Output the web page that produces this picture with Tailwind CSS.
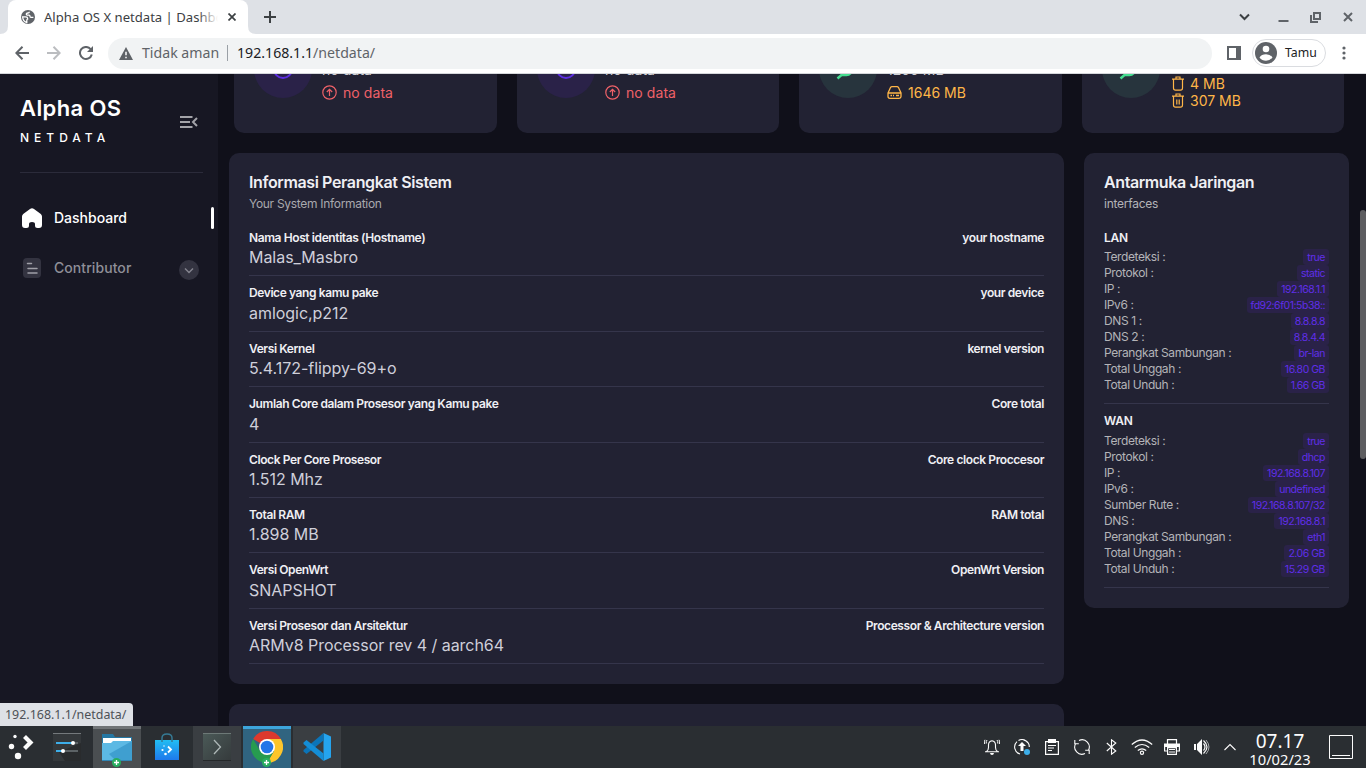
<!DOCTYPE html>
<html lang="id">
<head>
<meta charset="utf-8">
<title>Alpha OS X netdata | Dashboard</title>
<script src="https://cdn.jsdelivr.net/npm/@tailwindcss/browser@4"></script>
</head>
<body class="flex h-[768px] w-[1366px] flex-col overflow-hidden bg-[#10101a] font-['Inter',sans-serif]">

<!-- tab strip -->
<header class="flex h-[34px] shrink-0 bg-[#dee1e6] font-['Noto_Sans',sans-serif] text-[#3c4043]">
  <svg class="h-[34px] w-2 shrink-0" viewBox="0 0 8 34"><path d="M0 34Q8 34 8 26V34Z" fill="#fff"/></svg>
  <div class="flex w-[240px] items-center rounded-t-lg bg-white pl-[13px]">
    <svg class="mr-[9px] size-[14px] shrink-0" viewBox="0 0 14 14"><circle cx="7" cy="7" r="7" fill="#5f6368"/><path d="M1.600 6.800h3q2 0 2 1.800v.6q-.8 0-.8 1v2.300Q2 11.500 1.600 6.800zM8.300 1.700q0 1.300-1.500 1.300-1.500 0-1.500 1.300 0 .8.800.8h1.900q1 0 1 1.200T10 7.400h2.400" fill="none" stroke="#fff" stroke-width="1.300"/></svg>
    <div class="relative w-[174px] overflow-hidden whitespace-nowrap text-[13.1px] leading-[34px]">Alpha OS X netdata | Dashboard<span class="absolute inset-y-0 right-0 w-5 bg-gradient-to-r from-white/0 to-white"></span></div>
    <svg class="ml-[10px] size-[8px] shrink-0" viewBox="0 0 8 8"><path d="M.5.5l7 7M7.500.5l-7 7" stroke="#3c4043" stroke-width="1.700"/></svg>
  </div>
  <svg class="h-[34px] w-2 shrink-0" viewBox="0 0 8 34"><path d="M8 34Q0 34 0 26V34Z" fill="#fff"/></svg>
  <svg class="ml-2 mt-[11px] size-3" viewBox="0 0 12 12"><path d="M6 0v12M0 6h12" stroke="#3c4043" stroke-width="2"/></svg>
  <div class="ml-auto flex h-[34px] items-center pr-[13px]">
    <svg class="h-3 w-[11px]" viewBox="0 0 11 12"><path d="M1 3.500L5.500 8 10 3.500" fill="none" stroke="#3c4043" stroke-width="2"/></svg>
    <svg class="ml-[28px] h-3 w-[11px]" viewBox="0 0 11 12"><path d="M.5 10h10" stroke="#5f6368" stroke-width="2"/></svg>
    <svg class="ml-[21px] size-[11px]" viewBox="0 0 11 11"><path d="M4 1h6v6H4zM1 3v7h7" fill="none" stroke="#5f6368" stroke-width="2"/></svg>
    <svg class="ml-[22px] size-[10px]" viewBox="0 0 10 10"><path d="M1 1l8 8M9 1L1 9" stroke="#5f6368" stroke-width="2"/></svg>
  </div>
</header>

<!-- toolbar -->
<div class="flex h-10 shrink-0 items-center border-b border-[#d5d7db] bg-white pl-[15px] pr-[20px] pb-px font-['Noto_Sans',sans-serif]">
  <svg class="h-[14px] w-[14px]" viewBox="0 0 14 14"><path d="M14 7H1.500M7.500 .8L1.300 7l6.200 6.200" fill="none" stroke="#5f6368" stroke-width="2"/></svg>
  <svg class="ml-[18px] h-[14px] w-[14px]" viewBox="0 0 14 14"><path d="M0 7h12.500M6.500 .8L12.700 7l-6.200 6.200" fill="none" stroke="#bbbdc0" stroke-width="2"/></svg>
  <svg class="ml-[18px] h-[14px] w-[14px]" viewBox="0 0 14 14"><path d="M11.600 3.100A6 6 0 1 0 12.800 8.500" fill="none" stroke="#5f6368" stroke-width="2"/><path d="M14 0v6H8z" fill="#5f6368"/></svg>
  <div class="ml-[15px] flex h-[31px] w-[1104px] items-center rounded-full bg-[#f1f3f4] pl-[11px] text-[14.15px] leading-[29px]">
    <svg class="h-[13px] w-[14px]" viewBox="0 0 14 13"><path d="M7 0l7 13H0z" fill="#5f6368"/><path d="M7 4.800v3.500M7 9.700v1.500" stroke="#fff" stroke-width="1.500"/></svg>
    <span class="ml-[9px] h-[31px] w-[77px] whitespace-nowrap text-[#5f6368]">Tidak aman</span>
    <span class="ml-[8px] h-4 w-px bg-[#9aa0a6]"></span>
    <span class="ml-[9px] h-[31px] text-[#202124]">192.168.1.1<span class="text-[#5f6368]">/netdata/</span></span>
  </div>
  <svg class="ml-[15px] size-[14px]" viewBox="0 0 14 14"><path d="M1 1h12v12H1z" fill="none" stroke="#5f6368" stroke-width="2"/><path d="M9 0h5v14H9z" fill="#5f6368"/></svg>
  <div class="ml-[11px] flex h-7 w-[74px] items-center rounded-full border border-[#dadce0] pl-[2px] text-[12.3px] text-[#202124]">
    <svg class="mr-[8px] size-[22px]" viewBox="0 0 22 22"><circle cx="11" cy="11" r="11" fill="#5f6368"/><circle cx="11" cy="7" r="3.300" fill="#fff"/><path d="M4.500 15.500q2-3.300 6.500-3.300t6.500 3.300q-2.500 3.200-6.500 3.200t-6.500-3.200z" fill="#fff"/></svg>Tamu
  </div>
  <svg class="ml-auto mr-0 h-[14px] w-1" viewBox="0 0 4 14"><g fill="#5f6368"><circle cx="2" cy="2" r="1.600"/><circle cx="2" cy="7" r="1.600"/><circle cx="2" cy="12" r="1.600"/></g></svg>
</div>

<!-- page -->
<div class="relative flex min-h-0 grow overflow-hidden">
  <aside class="w-[218px] shrink-0 bg-[#171723]">
    <div class="ml-5 mt-[21px] flex h-[78px] w-[183px] border-b border-[#2b2b3a]">
      <div class="grow text-white">
        <div class="text-[22px] font-semibold leading-[27px] tracking-[0.4px]">Alpha OS</div>
        <div class="mt-[8px] text-[12px] font-medium leading-4 tracking-[5px]">NETDATA</div>
      </div>
      <svg class="mr-[5px] mt-[21px] h-3 w-[18px]" viewBox="0 0 18 12"><path d="M0 1h12.500M0 6h10M0 11h12.500M17 2l-4 4 4 4" fill="none" stroke="#a3a3a8" stroke-width="2"/></svg>
    </div>
    <div class="mt-[34px] flex h-[22px] items-center pl-[22px] pr-1 text-[14px] font-medium text-white">
      <svg class="h-5 w-5" viewBox="0 0 20 20"><path d="M0 8.500Q0 7 1.200 5.900L8 .9q2-1.400 4 0l6.800 5Q20 7 20 8.500V17q0 3-3 3h-1.500Q13 20 13 17.500V16q0-2-3-2t-3 2v1.500Q7 20 4.500 20H3q-3 0-3-3z" fill="#fff"/></svg>
      <span class="mb-[2px] ml-3 grow">Dashboard</span>
      <span class="h-[22px] w-[3px] rounded-sm bg-white"></span>
    </div>
    <div class="mt-[28px] flex h-[22px] items-center pl-[23px] pr-[19px] text-[14px] font-medium text-[#8f8f98]">
      <svg class="h-5 w-[18px]" viewBox="0 0 18 20"><rect width="18" height="20" rx="4" fill="#333340"/><path d="M4.500 5.500h4M5 10.500h9M5 15h9" stroke="#a0a0a8" stroke-width="1.500" stroke-linecap="round"/></svg>
      <span class="mb-[2px] ml-[13px] grow tracking-[0.07px]">Contributor</span>
      <svg class="mt-1 size-5" viewBox="0 0 20 20"><circle cx="10" cy="10" r="10" fill="#333340"/><path d="M6 8.500l4 4 4-4" fill="none" stroke="#85858f" stroke-width="1.400"/></svg>
    </div>
  </aside>

  <main class="flex min-w-0 grow flex-col">
    <!-- statistic cards, scrolled part way out of view -->
    <section class="ml-4 flex h-[59px] shrink-0 gap-5">
      <div class="flex w-[263px] overflow-hidden rounded-b-[10px] bg-[#222233] pl-5">
        <svg class="h-6 w-[58px]" viewBox="0 0 58 24"><circle cx="29" cy="-5" r="29" fill="#2a2248"/><circle cx="29" cy="-5" r="9" fill="none" stroke="#5c2de0" stroke-width="2"/></svg>
        <div class="ml-[10px] -mt-[13px] text-[14px] tracking-[0.07px]"><div class="h-[22px] leading-[18px] text-[#d0d0d5]">no data</div><div class="flex items-center leading-5 text-[#ee6168]"><svg class="mr-[6px] size-[15px] -mt-[2px]" viewBox="0 0 15 15"><g fill="none" stroke="#ee6168" stroke-width="1.200"><circle cx="7.500" cy="7.500" r="6.700"/><path d="M7.500 11V4.500M4.800 7l2.700-2.700L10.200 7"/></g></svg>no data</div></div>
      </div>
      <div class="flex w-[262px] overflow-hidden rounded-b-[10px] bg-[#222233] pl-5">
        <svg class="h-6 w-[58px]" viewBox="0 0 58 24"><circle cx="29" cy="-5" r="29" fill="#2a2248"/><circle cx="29" cy="-5" r="9" fill="none" stroke="#5c2de0" stroke-width="2"/></svg>
        <div class="ml-[10px] -mt-[13px] text-[14px] tracking-[0.07px]"><div class="h-[22px] leading-[18px] text-[#d0d0d5]">no data</div><div class="flex items-center leading-5 text-[#ee6168]"><svg class="mr-[6px] size-[15px] -mt-[2px]" viewBox="0 0 15 15"><g fill="none" stroke="#ee6168" stroke-width="1.200"><circle cx="7.500" cy="7.500" r="6.700"/><path d="M7.500 11V4.500M4.800 7l2.700-2.700L10.200 7"/></g></svg>no data</div></div>
      </div>
      <div class="flex w-[263px] overflow-hidden rounded-b-[10px] bg-[#222233] pl-5">
        <svg class="h-6 w-[58px]" viewBox="0 0 58 24"><circle cx="29" cy="-5" r="29" fill="#27343d"/><path d="M18.500 4.500l4-3.500h5q3 0 5-3" fill="none" stroke="#46dd90" stroke-width="2.500"/></svg>
        <div class="ml-[10px] -mt-[13px] text-[14px]"><div class="h-[22px] leading-[18px] text-[#d0d0d5]">1200 MB</div><div class="flex items-center leading-5 text-[#ffb648]"><svg class="mr-[6px] h-[13px] w-[15px] -mt-[2px]" viewBox="0 0 15 13"><g fill="none" stroke="#ffb648" stroke-width="1.300"><path d="M1 7L3.500 1.500Q4 .7 5 .7h5q1 0 1.500.8L14 7v3.500q0 1.800-1.800 1.800H2.800Q1 12.300 1 10.500zM1 7h13"/><path d="M3.500 9.500H5M6 9.500h1M9 9.500h3"/></g></svg>1646 MB</div></div>
      </div>
      <div class="flex w-[262px] overflow-hidden rounded-b-[10px] bg-[#222233] pl-5">
        <svg class="h-6 w-[58px]" viewBox="0 0 58 24"><circle cx="29" cy="-5" r="29" fill="#27343d"/><path d="M18.500 4.500l4-3.500h5q3 0 5-3" fill="none" stroke="#46dd90" stroke-width="2.500"/></svg>
        <div class="ml-[12px] mt-px text-[14px] leading-[17px] text-[#ffb648]">
          <div class="flex items-center"><svg class="mr-[6px] h-[15px] w-3" viewBox="0 0 12 15"><path d="M0 3.200h12M4 3V1h4v2M1.500 3.500V12q0 2.200 2 2.200h5q2 0 2-2.200V3.500" fill="none" stroke="#ffb648" stroke-width="1.200"/></svg>4 MB</div>
          <div class="flex items-center"><svg class="mr-[6px] h-[15px] w-3" viewBox="0 0 12 15"><path d="M0 3.200h12M4 3V1h4v2M1.500 3.500V12q0 2.200 2 2.200h5q2 0 2-2.200V3.500M4.800 6.500v5M7.200 6.500v5" fill="none" stroke="#ffb648" stroke-width="1.200"/></svg>307 MB</div>
        </div>
      </div>
    </section>

    <div class="ml-[11px] mt-5 flex gap-5">
      <div class="w-[835px] shrink-0">
        <section class="h-[531px] rounded-[10px] bg-[#222233] px-5 pt-[19px]">
          <h2 class="text-[16px] font-semibold leading-5 tracking-[-0.38px] text-[#efeff3]">Informasi Perangkat Sistem</h2>
          <p class="mt-[4px] text-[12px] leading-4 tracking-[-0.3px] text-[#a9a9ae]">Your System Information</p>
          <div class="mt-[9px] text-[16px] leading-[22px] tracking-[-0.04px] text-[#cfcfda]">
            <div class="h-[55.4px] border-b border-[#35354b] pt-2"><div class="flex h-[17.4px] justify-between text-[12px] font-semibold leading-[18px] tracking-[-0.4px] text-[#efeff3]"><span>Nama Host identitas (Hostname)</span><span>your hostname</span></div><div>Malas_Masbro</div></div>
            <div class="h-[55.4px] border-b border-[#35354b] pt-2"><div class="flex h-[17.4px] justify-between text-[12px] font-semibold leading-[18px] tracking-[-0.4px] text-[#efeff3]"><span>Device yang kamu pake</span><span>your device</span></div><div>amlogic,p212</div></div>
            <div class="h-[55.4px] border-b border-[#35354b] pt-2"><div class="flex h-[17.4px] justify-between text-[12px] font-semibold leading-[18px] tracking-[-0.4px] text-[#efeff3]"><span>Versi Kernel</span><span>kernel version</span></div><div>5.4.172-flippy-69+o</div></div>
            <div class="h-[55.4px] border-b border-[#35354b] pt-2"><div class="flex h-[17.4px] justify-between text-[12px] font-semibold leading-[18px] tracking-[-0.4px] text-[#efeff3]"><span>Jumlah Core dalam Prosesor yang Kamu pake</span><span>Core total</span></div><div>4</div></div>
            <div class="h-[55.4px] border-b border-[#35354b] pt-2"><div class="flex h-[17.4px] justify-between text-[12px] font-semibold leading-[18px] tracking-[-0.4px] text-[#efeff3]"><span>Clock Per Core Prosesor</span><span>Core clock Proccesor</span></div><div>1.512 Mhz</div></div>
            <div class="h-[55.4px] border-b border-[#35354b] pt-2"><div class="flex h-[17.4px] justify-between text-[12px] font-semibold leading-[18px] tracking-[-0.4px] text-[#efeff3]"><span>Total RAM</span><span>RAM total</span></div><div>1.898 MB</div></div>
            <div class="h-[55.4px] border-b border-[#35354b] pt-2"><div class="flex h-[17.4px] justify-between text-[12px] font-semibold leading-[18px] tracking-[-0.4px] text-[#efeff3]"><span>Versi OpenWrt</span><span>OpenWrt Version</span></div><div>SNAPSHOT</div></div>
            <div class="h-[55.4px] border-b border-[#35354b] pt-2"><div class="flex h-[17.4px] justify-between text-[12px] font-semibold leading-[18px] tracking-[-0.4px] text-[#efeff3]"><span>Versi Prosesor dan Arsitektur</span><span>Processor &amp; Architecture version</span></div><div>ARMv8 Processor rev 4 / aarch64</div></div>
          </div>
        </section>
        <section class="mt-5 h-20 rounded-[10px] bg-[#222233]"></section>
      </div>

      <section class="h-[455px] w-[265px] shrink-0 rounded-[10px] bg-[#222233] px-5 pt-[19px]">
        <h2 class="text-[16px] font-semibold leading-5 tracking-[-0.4px] text-[#efeff3]">Antarmuka Jaringan</h2>
        <p class="mt-[4px] text-[12px] leading-4 tracking-[-0.25px] text-[#b4b4b8]">interfaces</p>
        <div class="mt-[17px] h-[175px] border-b border-[#35354b] text-[12px] leading-4 tracking-[-0.39px] text-[#b4b4b8]">
          <h3 class="mb-[2px] font-semibold leading-[18px] tracking-[-0.2px] text-[#efeff3]">LAN</h3>
          <div class="flex justify-between"><span>Terdeteksi :</span><span class="rounded-[3px] bg-[#2a2248] px-1 pt-px leading-[15px] text-[10.5px] tracking-[-0.48px] text-[#602ee8]">true</span></div>
          <div class="flex justify-between"><span>Protokol :</span><span class="rounded-[3px] bg-[#2a2248] px-1 pt-px leading-[15px] text-[10.5px] tracking-[-0.48px] text-[#602ee8]">static</span></div>
          <div class="flex justify-between"><span>IP :</span><span class="rounded-[3px] bg-[#2a2248] px-1 pt-px leading-[15px] text-[10.5px] tracking-[-0.48px] text-[#602ee8]">192.168.1.1</span></div>
          <div class="flex justify-between"><span>IPv6 :</span><span class="rounded-[3px] bg-[#2a2248] px-1 pt-px leading-[15px] text-[10.5px] tracking-[-0.48px] text-[#602ee8]">fd92:6f01:5b38::</span></div>
          <div class="flex justify-between"><span>DNS 1 :</span><span class="rounded-[3px] bg-[#2a2248] px-1 pt-px leading-[15px] text-[10.5px] tracking-[-0.48px] text-[#602ee8]">8.8.8.8</span></div>
          <div class="flex justify-between"><span>DNS 2 :</span><span class="rounded-[3px] bg-[#2a2248] px-1 pt-px leading-[15px] text-[10.5px] tracking-[-0.48px] text-[#602ee8]">8.8.4.4</span></div>
          <div class="flex justify-between"><span>Perangkat Sambungan :</span><span class="rounded-[3px] bg-[#2a2248] px-1 pt-px leading-[15px] text-[10.5px] tracking-[-0.48px] text-[#602ee8]">br-lan</span></div>
          <div class="flex justify-between"><span>Total Unggah :</span><span class="rounded-[3px] bg-[#2a2248] px-1 pt-px leading-[15px] text-[10.5px] tracking-[-0.48px] text-[#602ee8]">16.80 GB</span></div>
          <div class="flex justify-between"><span>Total Unduh :</span><span class="rounded-[3px] bg-[#2a2248] px-1 pt-px leading-[15px] text-[10.5px] tracking-[-0.48px] text-[#602ee8]">1.66 GB</span></div>
        </div>
        <div class="h-[184px] border-b border-[#35354b] pt-2 text-[12px] leading-4 tracking-[-0.39px] text-[#b4b4b8]">
          <h3 class="mb-[3px] font-semibold leading-[18px] tracking-[-0.2px] text-[#efeff3]">WAN</h3>
          <div class="flex justify-between"><span>Terdeteksi :</span><span class="rounded-[3px] bg-[#2a2248] px-1 pt-px leading-[15px] text-[10.5px] tracking-[-0.48px] text-[#602ee8]">true</span></div>
          <div class="flex justify-between"><span>Protokol :</span><span class="rounded-[3px] bg-[#2a2248] px-1 pt-px leading-[15px] text-[10.5px] tracking-[-0.48px] text-[#602ee8]">dhcp</span></div>
          <div class="flex justify-between"><span>IP :</span><span class="rounded-[3px] bg-[#2a2248] px-1 pt-px leading-[15px] text-[10.5px] tracking-[-0.48px] text-[#602ee8]">192.168.8.107</span></div>
          <div class="flex justify-between"><span>IPv6 :</span><span class="rounded-[3px] bg-[#2a2248] px-1 pt-px leading-[15px] text-[10.5px] tracking-[-0.48px] text-[#602ee8]">undefined</span></div>
          <div class="flex justify-between"><span>Sumber Rute :</span><span class="rounded-[3px] bg-[#2a2248] px-1 pt-px leading-[15px] text-[10.5px] tracking-[-0.48px] text-[#602ee8]">192.168.8.107/32</span></div>
          <div class="flex justify-between"><span>DNS :</span><span class="rounded-[3px] bg-[#2a2248] px-1 pt-px leading-[15px] text-[10.5px] tracking-[-0.48px] text-[#602ee8]">192.168.8.1</span></div>
          <div class="flex justify-between"><span>Perangkat Sambungan :</span><span class="rounded-[3px] bg-[#2a2248] px-1 pt-px leading-[15px] text-[10.5px] tracking-[-0.48px] text-[#602ee8]">eth1</span></div>
          <div class="flex justify-between"><span>Total Unggah :</span><span class="rounded-[3px] bg-[#2a2248] px-1 pt-px leading-[15px] text-[10.5px] tracking-[-0.48px] text-[#602ee8]">2.06 GB</span></div>
          <div class="flex justify-between"><span>Total Unduh :</span><span class="rounded-[3px] bg-[#2a2248] px-1 pt-px leading-[15px] text-[10.5px] tracking-[-0.48px] text-[#602ee8]">15.29 GB</span></div>
        </div>
      </section>
    </div>
  </main>

  <div class="absolute right-0 top-[136px] h-[249px] w-[6px] rounded-full bg-[#5d5d60]"></div>
  <div class="absolute bottom-0 left-0 h-[23px] w-[133px] rounded-tr bg-[#dee1e6] pl-[5px] font-['Noto_Sans',sans-serif] text-[12.45px] leading-[23px] text-[#4d5156]">192.168.1.1/netdata/</div>
</div>

<!-- taskbar -->
<footer class="flex h-[42px] shrink-0 bg-[#2a2e32] font-['Noto_Sans',sans-serif] text-[#fcfcfc]">
  <div class="flex w-[43px] pl-2 pt-2"><svg class="h-[26px] w-[26px]" viewBox="0 0 26 26"><g fill="#fcfcfc"><circle cx="7" cy="2.500" r="1.700"/><circle cx="3.500" cy="12.500" r="2.700"/><circle cx="10" cy="22" r="3.200"/></g><path d="M16.500 2.500l6 6-6 6" fill="none" stroke="#fcfcfc" stroke-width="4.200"/></svg></div>
  <div class="flex w-[50px] pl-[10px] pt-[7px]"><svg class="size-7" viewBox="0 0 28 28"><rect width="28" height="28" fill="#34383b"/><path d="M0 .5h28" stroke="#74797c"/><path d="M28 10v18H12L6 19z" fill="#292b2d"/><path d="M3 10h17M3 18h7" stroke="#3daee9" stroke-width="2"/><path d="M20 10h5M10 18h15" stroke="#5c6265" stroke-width="2"/><circle cx="20" cy="10" r="2" fill="#fff"/><circle cx="10" cy="18" r="2" fill="#fff"/></svg></div>
  <div class="relative flex w-12 justify-center border-t-[3px] border-[#707477] bg-[#4a4e51] pt-1">
    <svg class="h-7 w-[30px]" viewBox="0 0 30 28"><path d="M0 27V1h11l2 3h17v23z" fill="#2577a3"/><path d="M1 5h28v8H1z" fill="#fff"/><path d="M0 10h9l2-2h19v20H0z" fill="#5cb9e4"/><path d="M30 8v20H14L7 21z" fill="#3f9fd0"/><path d="M0 27.500h30" stroke="#3186b5"/></svg>
    <svg class="absolute left-[19px] top-[29px] size-[9px]" viewBox="0 0 9 9"><circle cx="4.500" cy="4.500" r="4.500" fill="#27ae60"/><path d="M4.500 2v5M2 4.500h5" stroke="#fff" stroke-width="1.300"/></svg>
  </div>
  <div class="flex w-[52px] justify-center pt-[7px]"><svg class="h-7 w-6" viewBox="0 0 24 28"><defs><linearGradient id="bag" x2="0" y2="1"><stop stop-color="#22bdf2"/><stop offset="1" stop-color="#1e79ec"/></linearGradient></defs><path d="M0 7h24v20H0z" fill="url(#bag)"/><path d="M7 9V5q0-4 5-4t5 4v4" fill="none" stroke="#367a94" stroke-width="1.500"/><g fill="#fff"><circle cx="9" cy="13" r=".7"/><circle cx="7.500" cy="17" r="1.100"/><circle cx="10.500" cy="21" r="1.300"/></g><path d="M13 13.500l3 3-3 3" fill="none" stroke="#fff" stroke-width="1.800"/></svg></div>
  <div class="flex w-12 justify-center bg-[#3a3e42] pt-[7px]"><svg class="size-7" viewBox="0 0 28 28"><defs><linearGradient id="term" x2="1" y2="1"><stop stop-color="#4b5a58"/><stop offset="1" stop-color="#353a3c"/></linearGradient></defs><rect width="28" height="28" fill="url(#term)"/><path d="M0 .5h28" stroke="#6d7977"/><path d="M0 27.500h28" stroke="#25282a"/><path d="M11 7l6.500 7-6.500 7" fill="none" stroke="#aeb8b7" stroke-width="1.300"/></svg></div>
  <div class="relative ml-[2px] flex w-12 justify-center border-t-[3px] border-[#3da5dc] bg-[#306480] pt-[2px]">
    <svg class="size-8" viewBox="0 0 32 32"><path d="M16 16L2.140 8A16 16 0 0 1 29.860 8z" fill="#dc392d"/><path d="M16 8h13.860A16 16 0 0 1 16 32l6.900-12z" fill="#fcc52b"/><path d="M2.140 8A16 16 0 0 0 16 32l6.930-12H9.070z" fill="#279b4f"/><circle cx="16" cy="16" r="8" fill="#fff"/><circle cx="16" cy="16" r="6.300" fill="#2375e8"/></svg>
    <svg class="absolute left-[19px] top-[29px] size-[9px]" viewBox="0 0 9 9"><circle cx="4.500" cy="4.500" r="4.500" fill="#27ae60"/><path d="M4.500 2v5M2 4.500h5" stroke="#fff" stroke-width="1.300"/></svg>
  </div>
  <div class="ml-[2px] flex w-12 justify-center bg-[#3a3e42] pt-[7px]"><svg class="size-7" viewBox="0 0 28 28"><path d="M20.500 0L28 3.500v21L20.500 28z" fill="#25a4ee"/><path d="M20.500 0v7.500L3.500 21 .5 18.500v-1.500z" fill="#0b74b8"/><path d="M20.500 28v-7.500L3.500 7 .5 9.500V11z" fill="#148dd6"/></svg></div>

  <!-- system tray -->
  <div class="ml-auto flex items-center pr-[13px]">
    <svg class="h-4 w-4" viewBox="0 0 16 16"><g fill="none" stroke="#fcfcfc" stroke-width="1.100"><path d="M1 12.800h14M2.500 12.500q2-1.500 2-4V6Q4.500 2.300 8 1.800q3.500.5 3.500 4.200v2.500q0 2.500 2 4"/><path d="M3 1Q1.800 2.500 2.300 4.500M1 .8Q-.3 2.800 .7 5M13 1q1.200 1.500.7 3.500M15 .8q1.300 2 .3 4.200" stroke-width="1"/></g><path d="M6 14h4q-.3 2-2 2t-2-2z" fill="#fcfcfc"/></svg>
    <svg class="ml-[14px] size-4" viewBox="0 0 16 16"><path d="M6 15A7.300 7.300 0 0 1 3 2.600M4.500 1.500A7.300 7.300 0 0 1 15.300 8M9.500 1A7 7 0 0 1 14 4" fill="none" stroke="#fcfcfc" stroke-width="1.100"/><path d="M8 3L4 7h2.500v5h3V7H12z" fill="#fcfcfc"/><circle cx="13" cy="13" r="3" fill="#3daee9"/></svg>
    <svg class="ml-[15px] h-4 w-[14px]" viewBox="0 0 14 16"><path d="M.6 2.600h12.800v12.800H.6z" fill="none" stroke="#fcfcfc" stroke-width="1.200"/><path d="M3 0h8v4H3z" fill="#fcfcfc"/><path d="M3 6.500h8M3 9h6M3 11.500h4" stroke="#fcfcfc"/></svg>
    <svg class="ml-[15px] size-4" viewBox="0 0 16 16"><path d="M5 1.400A7.200 7.200 0 0 1 14.300 11.500M11 14.600A7.200 7.200 0 0 1 1.700 4.500M.8 1v3.800h4M15.200 15v-3.800h-4" fill="none" stroke="#fcfcfc" stroke-width="1.100"/></svg>
    <svg class="ml-[16px] h-4 w-[11px]" viewBox="0 0 11 16"><path d="M.8 4l9 8L5.500 15.200V.8L9.800 4l-9 8" fill="none" stroke="#fcfcfc" stroke-width="1.100"/></svg>
    <svg class="ml-[14px] h-4 w-[22px]" viewBox="0 0 22 16"><g fill="none" stroke="#fcfcfc" stroke-width="1.200"><path d="M.8 5.500Q11-3.500 21.200 5.500M3.800 8.500q7.200-6 14.400 0M6.800 11.500q4.200-3.300 8.400 0"/><circle cx="11" cy="13.800" r="1.600"/></g></svg>
    <svg class="ml-[11px] size-4" viewBox="0 0 16 16"><path d="M3.500 5V.6h9V5M3.500 12H.6V5h14.800v7h-2.900" fill="none" stroke="#fcfcfc" stroke-width="1.200"/><path d="M1 5h14v3H1z" fill="#fcfcfc"/><path d="M3.600 8.600h8.800v6.800H3.600z" fill="#2a2e32" stroke="#fcfcfc" stroke-width="1.200"/><path d="M5 10.500h6M5 13h6" stroke="#fcfcfc"/></svg>
    <svg class="ml-[14px] size-4" viewBox="0 0 16 16"><path d="M0 5h2v6H0zM3 5l5-5v16l-5-5z" fill="#fcfcfc"/><path d="M9.500 4.500q3 3.500 0 7M9.500 1.500q7 6.500 0 13" fill="none" stroke="#fcfcfc" stroke-width="1.200"/><path d="M12 1q6 7 0 14" fill="none" stroke="#a9acae"/></svg>
    <svg class="ml-[14px] h-3 w-3" viewBox="0 0 12 12"><path d="M.5 9L6 3.500 11.500 9" fill="none" stroke="#fcfcfc" stroke-width="1.100"/></svg>
    <div class="ml-[12px] flex w-[64px] flex-col items-center pt-[3px]"><div class="whitespace-nowrap text-[19px] leading-[21px]">07.17</div><div class="whitespace-nowrap text-[14.7px] leading-[15px]">10/02/23</div></div>
    <svg class="ml-[17px] size-6" viewBox="0 0 24 24"><path d="M.5.5h23v23H.5zM3 20.500h18" fill="none" stroke="#fcfcfc"/></svg>
  </div>
</footer>
</body>
</html>
